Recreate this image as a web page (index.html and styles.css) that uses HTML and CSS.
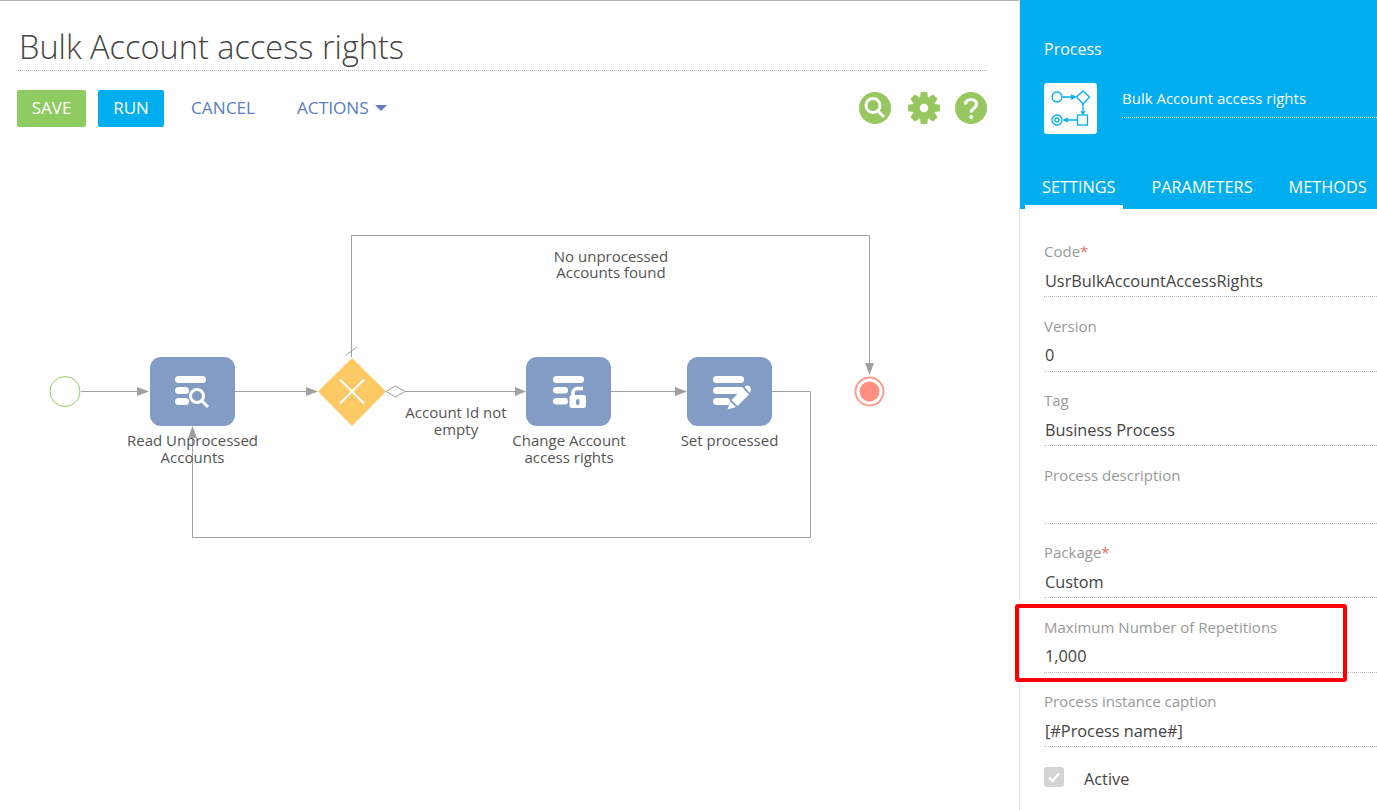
FILE: index.html
```html
<!DOCTYPE html>
<html lang="en">
<head>
<meta charset="utf-8">
<title>Bulk Account access rights</title>
<link rel="stylesheet" href="styles.css">
</head>
<body>
<div class="app">
  <main class="main">
    <h1 class="title">Bulk Account access rights</h1>
    <div class="toolbar">
      <button class="btn btn-save">SAVE</button>
      <button class="btn btn-run">RUN</button>
      <a class="link link-cancel">CANCEL</a>
      <a class="link link-actions">ACTIONS<span class="caret"></span></a>
      <div class="tools">
        <svg class="tool" width="32" height="32" viewBox="0 0 32 32"><circle cx="16" cy="16" r="16" fill="#96c85f"/><circle cx="14" cy="13.500" r="7" fill="none" stroke="#fff" stroke-width="3"/><path d="M19 19l6 6" stroke="#fff" stroke-width="3"/></svg>
        <svg class="tool tool-gear" width="32" height="32" viewBox="0 0 34 34"><g fill="#96c85f"><circle cx="17" cy="17" r="12"/><path d="M13.500 0H20.500L21.500 8H12.500Z"/><path d="M13.500 0H20.500L21.500 8H12.500Z" transform="rotate(45 17 17)"/><path d="M13.500 0H20.500L21.500 8H12.500Z" transform="rotate(90 17 17)"/><path d="M13.500 0H20.500L21.500 8H12.500Z" transform="rotate(135 17 17)"/><path d="M13.500 0H20.500L21.500 8H12.500Z" transform="rotate(180 17 17)"/><path d="M13.500 0H20.500L21.500 8H12.500Z" transform="rotate(225 17 17)"/><path d="M13.500 0H20.500L21.500 8H12.500Z" transform="rotate(270 17 17)"/><path d="M13.500 0H20.500L21.500 8H12.500Z" transform="rotate(315 17 17)"/></g><circle cx="17" cy="17" r="4.500" fill="#fff"/></svg>
        <svg class="tool" width="32" height="32" viewBox="0 0 32 32"><circle cx="16" cy="16" r="16" fill="#96c85f"/><path d="M10.500 12.500c0-3.300 2.500-5 5.500-5s5.500 1.800 5.500 4.800c0 4.500-5.300 4-5.300 8.200" fill="none" stroke="#fff" stroke-width="3.200"/><circle cx="16.200" cy="25" r="2.100" fill="#fff"/></svg>
      </div>
    </div>
    <svg class="diagram" width="1019" height="670" viewBox="0 140 1019 670">
      <g fill="none" stroke="#a0a0a0" stroke-width="1">
        <path d="M81 391.500H140"/>
        <path d="M235 391.500H307"/>
        <path d="M405 391.500H516"/>
        <path d="M611 391.500H677"/>
        <path d="M772 391.500H810.500V537.500H192.500V436"/>
        <path d="M351.500 357V235.500H869.500V365"/>
        <path d="M346 355L357 347"/>
        <path d="M386 391.500L395.500 386L405 391.500L395.500 397Z" fill="#fff"/>
      </g>
      <g fill="#a0a0a0">
        <path d="M149 391.500L137 387V396Z"/>
        <path d="M318 391.500L306 387V396Z"/>
        <path d="M526 391.500L515 387V396Z"/>
        <path d="M687 391.500L675 387V396Z"/>
        <path d="M192.500 426L188 438H197Z"/>
        <path d="M869.500 375L865 363H874Z"/>
      </g>
      <circle cx="65" cy="391.500" r="15" fill="#fff" stroke="#96c85f" stroke-width="1"/>
      <rect x="150" y="357" width="85" height="69" rx="11" fill="#829cc4"/>
      <g fill="#fff">
        <rect x="175" y="376" width="31" height="7" rx="3.500"/>
        <rect x="175" y="387" width="14" height="7" rx="3.500"/>
        <rect x="175" y="398" width="14" height="7" rx="3.500"/>
      </g>
      <circle cx="197" cy="396" r="6.500" fill="#829cc4" stroke="#fff" stroke-width="3"/>
      <path d="M202 401L208 407" stroke="#fff" stroke-width="3"/>
      <path d="M352 358L386 391.500L352 426L318 391.500Z" fill="#fdc964"/>
      <path d="M340 379.500L364 403.500M364 379.500L340 403.500" stroke="#fff" stroke-width="2" fill="none"/>
      <rect x="526" y="357" width="85" height="69" rx="11" fill="#829cc4"/>
      <g fill="#fff">
        <rect x="553" y="376" width="31" height="7" rx="3.500"/>
        <rect x="553" y="387" width="15" height="6.500" rx="3.200"/>
        <rect x="553" y="398" width="15" height="6.500" rx="3.200"/>
        <rect x="569.500" y="395" width="16.500" height="13" rx="2.500"/>
      </g>
      <path d="M573 397V393A4.500 4.500 0 0 1 577.500 388.500H583" fill="none" stroke="#fff" stroke-width="3.500"/>
      <rect x="576" y="399" width="3.500" height="6" rx="1.700" fill="#829cc4"/>
      <rect x="687" y="357" width="85" height="69" rx="11" fill="#829cc4"/>
      <g fill="#fff">
        <rect x="713" y="376" width="31" height="7" rx="3.500"/>
        <rect x="713" y="387" width="31" height="7" rx="3.500"/>
        <rect x="713" y="398" width="17" height="7" rx="3.500"/>
        <path d="M731.500 400L743 388.500L749 394.500L737.500 406Z"/>
        <path d="M744.500 387L746.500 385.500L749.500 386L751 389L750 393Z"/>
        <path d="M730.300 401.500L736 407L727.500 409.500Z"/>
      </g>
      <circle cx="869.500" cy="391.500" r="14" fill="#fff" stroke="#ff9c8c" stroke-width="2"/>
      <circle cx="869.500" cy="391.500" r="10" fill="#ff8d80"/>
      <g class="dlabel" text-anchor="middle">
        <text x="192.500" y="446">Read Unprocessed</text>
        <text x="192.500" y="463">Accounts</text>
        <text x="456" y="418">Account Id not</text>
        <text x="456" y="435">empty</text>
        <text x="569" y="446">Change Account</text>
        <text x="569" y="463">access rights</text>
        <text x="729.500" y="446">Set processed</text>
        <text x="611" y="262">No unprocessed</text>
        <text x="611" y="278">Accounts found</text>
      </g>
    </svg>
  </main>
  <aside class="side">
    <header class="side-head">
      <div class="side-kicker">Process</div>
      <div class="side-id">
        <div class="logo">
          <svg width="53" height="51" viewBox="0 0 53 51" fill="none" stroke="#00aeef" stroke-width="1.300">
            <circle cx="13" cy="14" r="5"/>
            <path d="M18 14H30M27 12L31 14L27 16" stroke-width="1.500"/>
            <path d="M39 8L45.500 14L39 21L32.500 14Z"/>
            <path d="M39 21V30M37 28L39 31L41 28"/>
            <rect x="33.500" y="32" width="10" height="10"/>
            <path d="M33 37H21M24 35L20 37L24 39"/>
            <circle cx="13" cy="37" r="5"/>
            <circle cx="13" cy="37" r="2"/>
          </svg>
        </div>
        <div class="proc-name">Bulk Account access rights</div>
      </div>
      <nav class="tabs">
        <span class="tab tab-on">SETTINGS</span>
        <span class="tab">PARAMETERS</span>
        <span class="tab">METHODS</span>
      </nav>
    </header>
    <div class="form">
      <div class="field"><div class="lab">Code<span class="req">*</span></div><div class="val">UsrBulkAccountAccessRights</div></div>
      <div class="field"><div class="lab">Version</div><div class="val">0</div></div>
      <div class="field"><div class="lab">Tag</div><div class="val">Business Process</div></div>
      <div class="field field-tall"><div class="lab">Process description</div><div class="val">&nbsp;</div></div>
      <div class="field"><div class="lab">Package<span class="req">*</span></div><div class="val">Custom</div></div>
      <div class="field"><div class="lab">Maximum Number of Repetitions</div><div class="val">1,000</div></div>
      <div class="field"><div class="lab">Process instance caption</div><div class="val">[#Process name#]</div></div>
      <div class="check-row">
        <span class="check"><svg width="20" height="20" viewBox="0 0 20 20"><path d="M5 10.500L8.500 14L15 6.500" fill="none" stroke="#fff" stroke-width="2.500"/></svg></span>
        <span class="check-lab">Active</span>
      </div>
    </div>
    <div class="highlight"></div>
  </aside>
</div>
</body>
</html>
```

FILE: styles.css
```css
* { box-sizing: border-box; }
html, body { margin: 0; padding: 0; height: 810px; overflow: hidden; background: #fff; }
body { font-family: "Open Sans", "Liberation Sans", sans-serif; color: #444; }
.app { display: flex; width: 1377px; height: 810px; }
.main { width: 1019px; flex: none; border-top: 1px solid #b3b3b3; display: flex; flex-direction: column; }
.title {
  margin: 24px 32px 0 18px; height: 46px; padding-left: 1px;
  font-weight: 300; font-size: 32.500px; line-height: 43px; color: #444;
  border-bottom: 1px dotted #bbb;
}
.toolbar { display: flex; align-items: center; margin: 19px 32px 0 17px; height: 37px; }
.btn {
  height: 37px; border: 0; border-radius: 2px; color: #fff; padding: 0 0 3px;
  font: 400 17px "Open Sans", sans-serif;
}
.btn-save { width: 69px; background: #8ecb60; }
.btn-run { width: 66px; margin-left: 12px; background: #00aeef; }
.link { color: #5b7cc4; font-size: 17.200px; padding-bottom: 2px; }
.link-cancel { margin-left: 27px; }
.link-actions { margin-left: 42px; display: flex; align-items: center; }
.caret {
  margin-left: 6px; margin-top: 1px; width: 0; height: 0;
  border-left: 6px solid transparent; border-right: 6px solid transparent; border-top: 6px solid #5b7cc4;
}
.tools { margin-left: auto; display: flex; align-items: center; gap: 16px; padding-bottom: 2px; }
.tool { display: block; flex: none; }
.tool-gear { margin: 0 -1px 0 1px; }
.diagram { display: block; margin-top: 13px; flex: none; }
.dlabel { font-family: "Open Sans", sans-serif; font-size: 15px; fill: #555; }
.side { position: relative; width: 358px; flex: none; border-left: 1px solid #e6e6e6; }
.side-head { height: 209px; background: #00aeef; color: #fff; padding: 39px 0 0 24px; }
.side-kicker { font-size: 16px; line-height: 20px; }
.side-id { display: flex; margin-top: 24px; align-items: flex-start; }
.logo { width: 53px; height: 51px; background: #fff; border-radius: 3px; flex: none; }
.logo svg { display: block; }
.proc-name {
  margin-left: 25px; flex: 1; height: 35px; font-size: 15px; line-height: 30px;
  border-bottom: 1px dotted #cfeefb;
}
.tabs { display: flex; margin: 42px 0 0 -19px; white-space: nowrap; }
.tab { display: block; height: 33px; padding: 0 8px 0 17px; font-size: 16.300px; line-height: 22px; margin-right: 11px; }
.tab-on { box-shadow: inset 0 -4px 0 #fff; }
.form { padding: 33px 0 0 24px; }
.field { height: 74.500px; }
.field-tall { height: 77.500px; }
.lab { font-size: 15px; line-height: 19px; color: #999; }
.req { color: #e0705f; }
.val {
  margin-top: 8.500px; height: 27.500px; padding-left: 1px; font-size: 16.300px; line-height: 22px; color: #444;
  border-bottom: 1px dotted #bbb;
}
.field-tall .val { margin-top: 11.500px; }
.check-row { display: flex; align-items: center; margin-top: -2.600px; }
.check { width: 20px; height: 20px; background: #d4d4d4; border-radius: 3px; display: block; }
.check svg { display: block; }
.check-lab { margin-left: 20px; margin-top: 4px; font-size: 16.300px; line-height: 22px; }
.highlight {
  position: absolute; left: -5px; top: 604px; width: 332px; height: 78px;
  border: 4px solid #f00; border-radius: 3px; pointer-events: none;
}
```
